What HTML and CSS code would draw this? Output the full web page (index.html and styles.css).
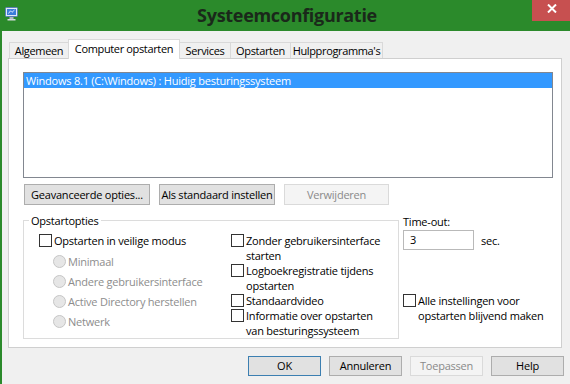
FILE: index.html
```html
<!DOCTYPE html>
<html lang="nl">
<head>
<meta charset="utf-8">
<title>Systeemconfiguratie</title>
<link rel="stylesheet" href="styles.css">
</head>
<body>
<div class="window">
  <div class="titlebar">
    <div class="app-icon">
      <svg width="13" height="14" viewBox="0 0 13 14">
        <rect x="0.5" y="0.5" width="12" height="9" rx="1" fill="#e3ebf6" stroke="#5a7fb5"/>
        <rect x="2" y="2" width="9" height="6" fill="#3b7ddb"/>
        <path d="M3.5 6.5 L5.5 3.8 L7 5.3 L9.5 3" stroke="#ffffff" fill="none" stroke-width="0.8"/>
        <rect x="4.5" y="10" width="4" height="2" fill="#aeb9c2"/>
        <rect x="2.5" y="12" width="8" height="1.5" fill="#d5dbe0"/>
      </svg>
    </div>
    <div class="title">Systeemconfiguratie</div>
    <div class="close">
      <svg width="10" height="9" viewBox="0 0 10 9">
        <path d="M1 0.5 L9 8.5 M9 0.5 L1 8.5" stroke="#ffffff" stroke-width="2"/>
      </svg>
    </div>
  </div>
  <div class="client">
    <div class="tabs">
      <div class="tab t1">Algemeen</div>
      <div class="tab t2 active">Computer opstarten</div>
      <div class="tab t3">Services</div>
      <div class="tab t4">Opstarten</div>
      <div class="tab t5">Hulpprogramma's</div>
    </div>
    <div class="panel">
      <div class="listbox">
        <div class="item selected">Windows 8.1 (C:\Windows) : Huidig besturingssysteem</div>
      </div>
      <div class="btn-row">
        <button class="btn adv">Geavanceerde opties...</button>
        <button class="btn def">Als standaard instellen</button>
        <button class="btn del disabled">Verwijderen</button>
      </div>
      <div class="options">
        <fieldset class="group">
          <legend>Opstartopties</legend>
          <div class="group-cols">
            <div class="col-left">
              <div class="check"><span class="box"></span><span>Opstarten in veilige modus</span></div>
              <div class="radios">
                <div class="radio"><span class="dot"></span><span>Minimaal</span></div>
                <div class="radio"><span class="dot"></span><span>Andere gebruikersinterface</span></div>
                <div class="radio"><span class="dot"></span><span>Active Directory herstellen</span></div>
                <div class="radio"><span class="dot"></span><span>Netwerk</span></div>
              </div>
            </div>
            <div class="col-right">
              <div class="check"><span class="box"></span><span>Zonder gebruikersinterface<br>starten</span></div>
              <div class="check"><span class="box"></span><span>Logboekregistratie tijdens<br>opstarten</span></div>
              <div class="check"><span class="box"></span><span>Standaardvideo</span></div>
              <div class="check"><span class="box"></span><span>Informatie over opstarten<br>van besturingssysteem</span></div>
            </div>
          </div>
        </fieldset>
        <div class="timeout">
          <div class="timeout-label">Time-out:</div>
          <div class="timeout-row"><div class="input">3</div><span>sec.</span></div>
          <div class="check persist"><span class="box"></span><span>Alle instellingen voor<br>opstarten blijvend maken</span></div>
        </div>
      </div>
    </div>
    <div class="footer">
      <button class="btn fbtn primary">OK</button>
      <button class="btn fbtn">Annuleren</button>
      <button class="btn fbtn disabled">Toepassen</button>
      <button class="btn fbtn">Help</button>
    </div>
  </div>
</div>
</body>
</html>
```
FILE: styles.css
```css
html, body {
  margin: 0;
  padding: 0;
}
body {
  width: 570px;
  height: 384px;
  overflow: hidden;
  font-family: "Open Sans", "Noto Sans", sans-serif;
  font-size: 11px;
  letter-spacing: -0.22px;
  color: #000;
}
.window {
  background: #2b8a2b;
  height: 384px;
  display: flex;
  flex-direction: column;
}
.titlebar {
  height: 31px;
  flex: none;
  display: grid;
  grid-template-columns: 1fr auto 1fr;
  align-items: start;
}
.app-icon {
  padding: 7px 0 0 5px;
  line-height: 0;
}
.title {
  font-size: 18px;
  font-weight: 700;
  letter-spacing: -0.3px;
  color: #1a281a;
  line-height: 31px;
  padding-left: 4px;
}
.close {
  justify-self: end;
  width: 40px;
  height: 21px;
  box-sizing: border-box;
  background: #c75050;
  display: flex;
  justify-content: center;
  align-items: flex-start;
  padding-top: 4px;
  margin-right: -2px;
}
.client {
  flex: 1;
  margin-left: 2px;
  background: #f0f0f0;
  padding: 8px 0 0 6px;
}
.tabs {
  display: flex;
  align-items: flex-end;
  height: 19px;
  padding-left: 1px;
  position: relative;
  z-index: 1;
}
.tab {
  box-sizing: border-box;
  height: 16px;
  border: 1px solid #d9d9d9;
  border-bottom: none;
  background: #f0f0f0;
  margin-right: -1px;
  text-align: center;
  line-height: 15px;
  letter-spacing: -0.35px;
  white-space: nowrap;
}
.tab.active {
  height: 20px;
  background: #fff;
  margin-bottom: -1px;
  padding-top: 1px;
}
.t1 { width: 60px; }
.t2 { width: 112px; }
.t3 { width: 52px; }
.t4 { width: 61px; }
.t5 { width: 93px; }
.panel {
  width: 554px;
  box-sizing: border-box;
  border: 1px solid #cfcfcf;
  background: #fff;
  padding: 13px 8px 8px 14px;
}
.listbox {
  height: 106px;
  box-sizing: border-box;
  border: 1px solid #828790;
  background: #fff;
}
.item.selected {
  background: #3399ff;
  color: #fff;
  height: 15px;
  line-height: 15px;
  padding-left: 2px;
  white-space: nowrap;
}
.btn-row {
  display: flex;
  gap: 9px;
  margin-top: 6px;
  padding-left: 1px;
}
.btn {
  box-sizing: border-box;
  height: 21px;
  border: 1px solid #adadad;
  background: #e1e1e1;
  font: inherit;
  letter-spacing: inherit;
  color: #000;
  padding: 0;
  line-height: 19px;
  text-align: center;
  white-space: nowrap;
}
.btn.adv { width: 126px; }
.btn.def { width: 116px; }
.btn.del { width: 105px; }
.btn.disabled {
  background: #f4f4f4;
  border-color: #dadada;
  color: #8a8a8a;
}
.options {
  display: flex;
  margin-top: 8px;
}
.group {
  width: 376px;
  height: 126px;
  box-sizing: border-box;
  margin: 0;
  border: 1px solid #dcdcdc;
  padding: 0 0 0 5px;
  min-width: 0;
}
.group legend {
  padding: 0 2px;
  line-height: 15px;
}
.group-cols {
  display: flex;
  padding: 5px 0 0 10px;
}
.col-left {
  width: 192px;
  flex: none;
}
.check {
  display: flex;
  align-items: flex-start;
  line-height: 15px;
  white-space: nowrap;
}
.box {
  flex: none;
  width: 13px;
  height: 13px;
  box-sizing: border-box;
  border: 1px solid #333;
  background: #fff;
  margin: 1px 2px 0 0;
}
.radios {
  padding-left: 14px;
  margin-top: 3px;
}
.radio {
  display: flex;
  align-items: center;
  height: 20px;
  color: #8d8d8d;
  white-space: nowrap;
}
.dot {
  flex: none;
  width: 13px;
  height: 13px;
  box-sizing: border-box;
  border-radius: 50%;
  border: 1px solid #c6c6c6;
  background: #e6e6e6;
  margin-right: 2px;
}
.timeout {
  margin-left: 4px;
}
.timeout-label {
  line-height: 15px;
  margin-top: 1px;
}
.timeout-row {
  display: flex;
  align-items: center;
  gap: 7px;
  margin-top: 1px;
}
.input {
  width: 71px;
  height: 20px;
  box-sizing: border-box;
  border: 1px solid #b9b9b9;
  background: #fff;
  padding-left: 6px;
  line-height: 18px;
}
.persist {
  margin-top: 43px;
}
.footer {
  display: flex;
  justify-content: flex-end;
  gap: 8px;
  padding: 8px 6px 0 0;
}
.fbtn {
  width: 73px;
  height: 20px;
  line-height: 18px;
}
.fbtn.primary {
  border-color: #3c7fb1;
}
```
